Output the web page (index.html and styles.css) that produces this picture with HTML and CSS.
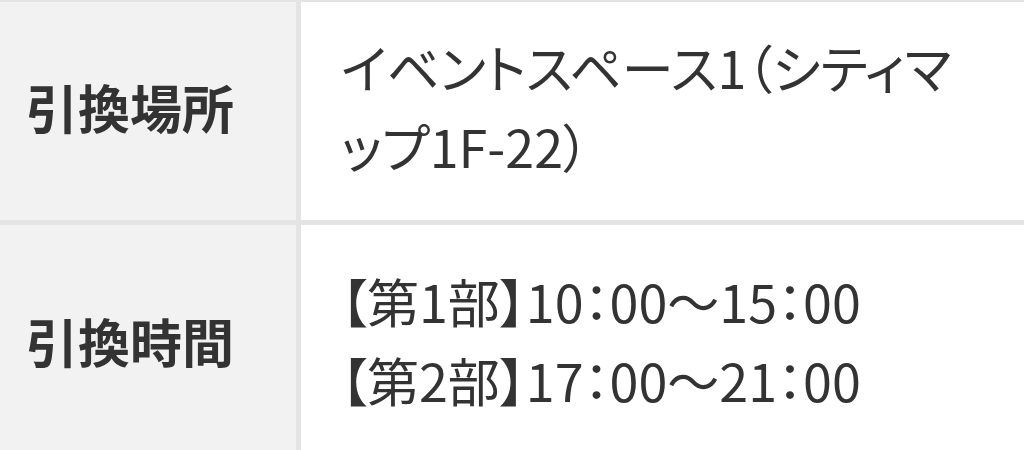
FILE: index.html
```html
<!DOCTYPE html>
<html lang="ja">
<head>
<meta charset="utf-8">
<link rel="stylesheet" href="styles.css">
</head>
<body>
<table class="info">
  <tr>
    <th class="label">引換場所</th>
    <td class="value">イベントスペース1（シティマップ1F-22）</td>
  </tr>
  <tr>
    <th class="label">引換時間</th>
    <td class="value">【第1部】10：00～15：00<br>【第2部】17：00～21：00</td>
  </tr>
</table>
</body>
</html>
```
FILE: styles.css
```css
html, body {
  margin: 0;
  padding: 0;
  background: #ffffff;
}
body {
  font-family: "Noto Sans CJK JP", "Noto Sans", sans-serif;
  color: #333333;
  width: 1024px;
  height: 450px;
  overflow: hidden;
}
.info {
  border-collapse: collapse;
  width: 1024px;
  border-top: 2px solid #e4e4e4;
}
.info tr {
  border-bottom: 5px solid #e4e4e4;
}
.label {
  width: 270px;
  background: #f2f2f2;
  border-right: 5px solid #e4e4e4;
  text-align: left;
  padding: 0 0 0 26px;
  font-size: 52px;
  font-weight: 700;
  vertical-align: middle;
}
.info tr:first-child .label,
.info tr:first-child .value {
  height: 208px;
  padding-bottom: 10px;
}
.info tr:last-child .label,
.info tr:last-child .value {
  height: 230px;
}
.value {
  padding: 0 60px 0 40px;
  font-size: 52px;
  line-height: 79px;
  font-weight: 400;
  vertical-align: middle;
  font-feature-settings: "palt";
}
```
